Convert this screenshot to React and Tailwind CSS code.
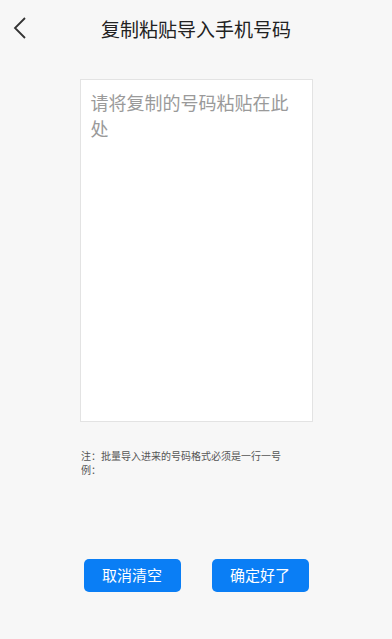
export default function App() {
  return (
    <div
      className="flex h-[639px] w-full flex-col bg-[#f7f7f7]"
      style={{ fontFamily: '"Noto Sans CJK SC", "Noto Sans", sans-serif' }}
    >
      <header className="relative flex h-[56px] items-center justify-center">
        <button className="absolute left-[12px] top-[16px] text-[#333]">
          <svg width="16" height="24" viewBox="0 0 16 24" fill="none">
            <path d="M13 2 L3 12 L13 22" stroke="#333" strokeWidth="1.8" />
          </svg>
        </button>
        <h1 className="text-[19px] leading-none text-[#222]">复制粘贴导入手机号码</h1>
      </header>

      <div className="mt-[23px] flex justify-center">
        <textarea
          placeholder="请将复制的号码粘贴在此处"
          className="h-[343px] w-[233px] resize-none border border-[#e3e3e3] bg-white px-[10px] py-[9px] text-[18px] leading-[26px] text-[#333] outline-none placeholder:text-[#9a9a9a]"
        />
      </div>

      <div className="mt-[27px] pl-[81px] text-[10px] leading-[14px] text-[#555]">
        <p>注：批量导入进来的号码格式必须是一行一号</p>
        <p>例：</p>
      </div>

      <div className="mt-[82px] flex justify-center gap-[31px]">
        <button className="h-[33px] w-[97px] rounded-[5px] bg-[#0a7ef5] text-[15px] text-white">
          取消清空
        </button>
        <button className="h-[33px] w-[97px] rounded-[5px] bg-[#0a7ef5] text-[15px] text-white">
          确定好了
        </button>
      </div>
    </div>
  );
}
